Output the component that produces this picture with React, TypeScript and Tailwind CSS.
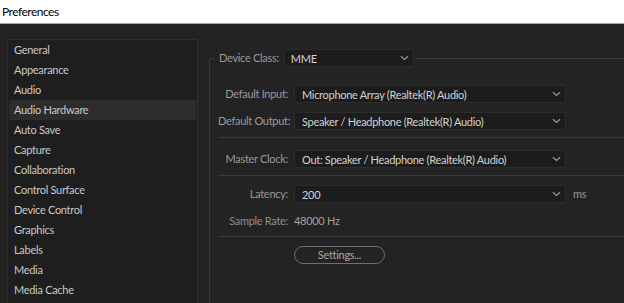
import React from "react";

const items = [
  "General",
  "Appearance",
  "Audio",
  "Audio Hardware",
  "Auto Save",
  "Capture",
  "Collaboration",
  "Control Surface",
  "Device Control",
  "Graphics",
  "Labels",
  "Media",
  "Media Cache",
];

function Chevron() {
  return (
    <svg width="9" height="6" viewBox="0 0 9 6" className="shrink-0">
      <path d="M1 1.2 L4.5 4.5 L8 1.2" fill="none" stroke="#9a9a9a" strokeWidth="1.2" />
    </svg>
  );
}

function Select({ value, className }: { value: string; className: string }) {
  return (
    <div
      className={`flex h-[18px] items-center justify-between rounded-[2px] border border-[#2c2c2c] bg-[#1c1c1c] pr-[4px] text-[#d2d2d2] ${className}`}
    >
      <span className="whitespace-nowrap leading-none">{value}</span>
      <Chevron />
    </div>
  );
}

function Row({ label, children }: { label: string; children: React.ReactNode }) {
  return (
    <div className="flex items-center">
      <div className="w-[70px] shrink-0 whitespace-nowrap text-right text-[#9a9a9a]">{label}</div>
      <div className="ml-[6px] flex items-center">{children}</div>
    </div>
  );
}

export default function App() {
  return (
    <div
      className="h-[303px] w-[624px] overflow-hidden bg-[#232323] text-[11px] tracking-[-0.3px]"
      style={{ fontFamily: 'Lato, "Noto Sans", sans-serif' }}
    >
      <div className="flex h-[24px] items-center border-b border-[#a8a8a8] bg-white pl-[2px] text-[12px] tracking-[-0.5px] text-black">
        Preferences
      </div>
      <div className="flex pl-[7px] pt-[15px]">
        <div className="h-[300px] w-[191px] shrink-0 rounded-[2px] border border-[#303030] bg-[#1e1e1e] pl-[1px] pr-[1px]">
          {items.map((it) => (
            <div
              key={it}
              className={`flex h-[20px] items-center pl-[5px] text-[#c8c8c8] ${
                it === "Audio Hardware" ? "bg-[#2c2c2c]" : ""
              }`}
            >
              {it}
            </div>
          ))}
        </div>
        <fieldset className="ml-[11px] mt-[10px] h-[300px] flex-1 rounded-tl-[3px] border-l border-t border-[#3a3a3a]">
          <legend className="ml-[5px] flex items-center pl-[4px] pr-[1px]">
            <span className="text-[#9a9a9a]">Device Class:</span>
            <Select value="MME" className="ml-[5px] w-[130px] pl-[6px]" />
          </legend>
          <div className="mt-[18px] flex flex-col pl-[8px]">
            <Row label="Default Input:">
              <Select value="Microphone Array (Realtek(R) Audio)" className="w-[272px] pl-[7px]" />
            </Row>
            <div className="mt-[9px]">
              <Row label="Default Output:">
                <Select value="Speaker / Headphone (Realtek(R) Audio)" className="w-[272px] pl-[7px]" />
              </Row>
            </div>
            <div className="mt-[7px] h-px bg-[#383838]" />
            <div className="mt-[12px]">
              <Row label="Master Clock:">
                <Select value="Out: Speaker / Headphone (Realtek(R) Audio)" className="w-[272px] pl-[7px]" />
              </Row>
            </div>
            <div className="mt-[7px] h-px bg-[#383838]" />
            <div className="mt-[9px]">
              <Row label="Latency:">
                <Select value="200" className="w-[272px] pl-[7px]" />
                <span className="ml-[7px] text-[#9a9a9a]">ms</span>
              </Row>
            </div>
            <div className="mt-[9px] flex h-[18px] items-center">
              <div className="w-[70px] shrink-0 whitespace-nowrap text-right text-[#8e8e8e]">Sample Rate:</div>
              <div className="ml-[6px] text-[#a0a0a0]">48000 Hz</div>
            </div>
            <div className="mt-[6px] h-px bg-[#383838]" />
            <div className="ml-[76px] mt-[9px]">
              <div className="flex h-[18px] w-[91px] items-center justify-center rounded-full border border-[#6e6e6e] text-[#a8a8a8]">
                Settings...
              </div>
            </div>
          </div>
        </fieldset>
      </div>
    </div>
  );
}
